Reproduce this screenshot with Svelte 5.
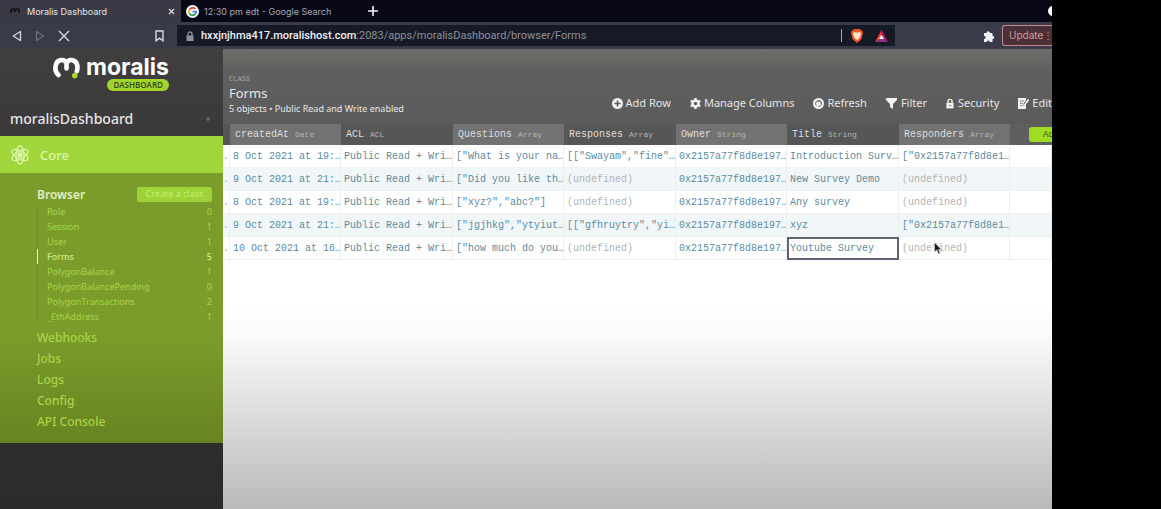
<script>
	const classes = [
		{ name: 'Role', count: 0 },
		{ name: 'Session', count: 1 },
		{ name: 'User', count: 1 },
		{ name: 'Forms', count: 5 },
		{ name: 'PolygonBalance', count: 1 },
		{ name: 'PolygonBalancePending', count: 0 },
		{ name: 'PolygonTransactions', count: 2 },
		{ name: '_EthAddress', count: 1 }
	];
	const sections = ['Webhooks', 'Jobs', 'Logs', 'Config', 'API Console'];

	const columns = [
		{ name: 'createdAt', type: 'Date' },
		{ name: 'ACL', type: 'ACL' },
		{ name: 'Questions', type: 'Array' },
		{ name: 'Responses', type: 'Array' },
		{ name: 'Owner', type: 'String' },
		{ name: 'Title', type: 'String' },
		{ name: 'Responders', type: 'Array' }
	];

	const acl = 'Public Read + Wri…';
	const owner = '0x2157a77f8d8e197…';
	const responder = '["0x2157a77f8d8e1…';
	const none = '(undefined)';

	const rows = [
		['8 Oct 2021 at 19:…', acl, '["What is your na…', '[["Swayam","fine"…', owner, 'Introduction Surv…', responder],
		['9 Oct 2021 at 21:…', acl, '["Did you like th…', none, owner, 'New Survey Demo', none],
		['8 Oct 2021 at 19:…', acl, '["xyz?","abc?"]', none, owner, 'Any survey', none],
		['9 Oct 2021 at 21:…', acl, '["jgjhkg","ytyiut…', '[["gfhruytry","yi…', owner, 'xyz', responder],
		['10 Oct 2021 at 16…', acl, '["how much do you…', none, owner, 'Youtube Survey', none]
	];

	let currentClass = 'Forms';
	let selected = { row: 4, col: 5 };
	let url = 'hxxjnjhma417.moralishost.com';
</script>

<div class="window">
	<header class="chrome">
		<div class="tabs">
			<div class="tab active">
				<svg class="favicon" viewBox="0 0 12 12"><path d="M2 8V6q0-2 2-2t2 3q0-3 2-3t2 2v2" fill="none" stroke="#15151b" stroke-width="2" /></svg>
				<span class="tab-title">Moralis Dashboard</span>
				<button class="plain close" aria-label="Close tab">
					<svg width="7" height="7" viewBox="0 0 7 7"><path d="M1 1l5 5M6 1L1 6" stroke="#d5d5dc" stroke-width="1.3" /></svg>
				</button>
			</div>
			<div class="tab">
				<svg class="google" viewBox="0 0 14 14">
					<circle cx="7" cy="7" r="7" fill="#fff" />
					<g fill="none" stroke-width="2">
						<path d="M3.6 5A4 4 0 0 1 10 4.3" stroke="#e84435" />
						<path d="M3.5 9A4 4 0 0 1 3.6 5" stroke="#f6bb1a" />
						<path d="M9.8 9.9A4 4 0 0 1 3.5 9" stroke="#34a453" />
						<path d="M7 7.2h4A4 4 0 0 1 9.8 9.9" stroke="#4285f4" />
					</g>
				</svg>
				<span class="tab-title">12:30 pm edt - Google Search</span>
			</div>
			<button class="plain new-tab" aria-label="New tab">
				<svg width="10" height="10" viewBox="0 0 10 10"><path d="M5 0v10M0 5h10" stroke="#f4f4f8" stroke-width="1.6" /></svg>
			</button>
			<svg class="account" width="4" height="10" viewBox="0 0 4 10"><circle cx="5" cy="5" r="5" fill="#fff" /></svg>
		</div>

		<div class="navbar">
			<button class="plain" aria-label="Back">
				<svg width="10" height="12" viewBox="0 0 10 12"><path d="M8.500 1.500v9L1.200 6z" fill="none" stroke="#d3d4da" stroke-width="1.4" stroke-linejoin="round" /></svg>
			</button>
			<button class="plain" aria-label="Forward">
				<svg width="10" height="12" viewBox="0 0 10 12"><path d="M1.500 1.500v9L8.500 6z" fill="none" stroke="#70727d" stroke-width="1.2" stroke-linejoin="round" /></svg>
			</button>
			<button class="plain" aria-label="Stop">
				<svg width="12" height="12" viewBox="0 0 12 12"><path d="M1 1l10 10M11 1L1 11" stroke="#d9dae0" stroke-width="1.4" /></svg>
			</button>
			<button class="plain bookmark" aria-label="Bookmark">
				<svg width="9" height="12" viewBox="0 0 9 12"><path d="M1 1h7v9.800L4.500 8.200 1 10.800z" fill="none" stroke="#d9dae0" stroke-width="1.4" /></svg>
			</button>
			<div class="address">
				<svg width="8" height="10" viewBox="0 0 8 10"><path d="M2 5V3a2 2 0 0 1 4 0v2" fill="none" stroke="#8e9099" stroke-width="1.3" /><path d="M.5 4.500h7V10h-7z" fill="#8e9099" /></svg>
				<a class="url" href="#forms"><b>{url}</b>:2083/apps/moralisDashboard/browser/Forms</a>
				<span class="divider"></span>
				<svg width="12" height="14" viewBox="0 0 12 14"><path d="M3 0h6l1 1.500 1.500 0L12 4l-1.500 6L6 14 1.500 10 0 4l.5-2.500H2z" fill="#f0592a" /><path d="M3 3l3 .8L9 3l1 2-1.500 4L6 11 3.500 9 2 5z" fill="#ffe6c8" /></svg>
				<svg class="bat" width="13" height="12" viewBox="0 0 13 12"><path d="M6.500 0L9.700 5.500 6.500 5z" fill="#9e1f63" /><path d="M6.500 0L0 12l6.500-4z" fill="#f0442c" /><path d="M0 12h13L6.500 8z" fill="#8d3197" /><path d="M6.500 0L13 12 6.500 8z" fill="#b31e63" /><path d="M6.500 4.800L9 9H4z" fill="#fff" /></svg>
			</div>
			<button class="plain extensions" aria-label="Extensions">
				<svg width="12" height="12" viewBox="0 0 12 12"><path d="M1 3h2.500a1.700 1.700 0 1 1 3.400 0H9.500v2.700a1.700 1.700 0 1 1 0 3.400V12H6.800a1.500 1.500 0 1 0-3 0H1V9a1.600 1.600 0 1 0 0-3.200z" fill="#eef0f6" /></svg>
			</button>
			<button class="update">Update <span>⋮</span></button>
		</div>
	</header>

	<div class="app">
		<aside class="sidebar">
			<div class="logo">
				<svg width="27" height="23" viewBox="0 0 27 23">
					<path d="M5.500 18C2.200 15 2 11 2.800 8 4.200 2.200 11.500 1.300 13.500 6.300v5.200V6.300C15.500 1.300 22.800 2.200 24.200 8c.5 2.600.3 4.500-.4 6.200" fill="none" stroke="#fff" stroke-width="4.6" stroke-linecap="round" stroke-linejoin="round" />
					<circle cx="21.800" cy="18.600" r="2.800" fill="#a6d72e" />
				</svg>
				<div class="brand">
					<span class="brand-name">moralis</span>
					<span class="pill">DASHBOARD</span>
				</div>
			</div>

			<button class="app-name">moralisDashboard <span>▼</span></button>

			<a class="core" href="#core">
				<svg width="20" height="20" viewBox="0 0 20 20" fill="none" stroke="#ddf5a8" stroke-width="1.3">
					<ellipse cx="10" cy="10" rx="4" ry="9" />
					<ellipse cx="10" cy="10" rx="4" ry="9" transform="rotate(60 10 10)" />
					<ellipse cx="10" cy="10" rx="4" ry="9" transform="rotate(120 10 10)" />
					<circle cx="10" cy="10" r="2" fill="#ddf5a8" />
				</svg>
				Core
			</a>

			<nav class="menu">
				<div class="browser">
					<a href="#browser">Browser</a>
					<button class="create">Create a class</button>
				</div>
				<ul class="classes">
					{#each classes as item (item.name)}
						<li class:current={item.name === currentClass}>
							<a href="#{item.name}">{item.name}</a>
							<span>{item.count}</span>
						</li>
					{/each}
				</ul>
				{#each sections as section}
					<a class="section" href="#{section}">{section}</a>
				{/each}
			</nav>
		</aside>

		<main class="content">
			<div class="toolbar">
				<div class="heading">
					<small>CLASS</small>
					<h1>Forms</h1>
					<p>5 objects • Public Read and Write enabled</p>
				</div>
				<div class="actions">
					<button class="plain">
						<svg width="11" height="11" viewBox="0 0 11 11"><circle cx="5.500" cy="5.500" r="5.500" fill="#f2f2f2" /><path d="M5.500 2.500v6M2.500 5.500h6" stroke="#5c5c5c" stroke-width="1.600" /></svg>
						Add Row
					</button>
					<button class="plain">
						<svg width="11" height="11" viewBox="0 0 12 12"><circle cx="6" cy="6" r="3.300" fill="none" stroke="#f2f2f2" stroke-width="2.600" /><path d="M6 0v2.500M6 9.500V12M.8 3l2.200 1.300M9 7.700L11.200 9M.8 9L3 7.700M9 4.300L11.200 3" stroke="#f2f2f2" stroke-width="2.400" /></svg>
						Manage Columns
					</button>
					<button class="plain">
						<svg width="11" height="11" viewBox="0 0 11 11"><circle cx="5.500" cy="5.500" r="5.500" fill="#f2f2f2" /><path d="M3.200 7.300A3 3 0 1 1 5.500 8.500M3.800 3.700A2.800 2.800 0 0 1 8.300 5.500" fill="none" stroke="#666" stroke-width="1" /></svg>
						Refresh
					</button>
					<button class="plain filter">
						<svg width="11" height="11" viewBox="0 0 11 11"><path d="M0 0h11v2L7 6v5L4 9V6L0 2z" fill="#f2f2f2" /></svg>
						Filter
					</button>
					<button class="plain filter">
						<svg width="8" height="11" viewBox="0 0 9 11"><path d="M2.200 5.500V3.200a2.300 2.300 0 0 1 4.600 0v2.300" fill="none" stroke="#f2f2f2" stroke-width="1.600" /><path d="M.5 4.800h8V11h-8z" fill="#f2f2f2" /><path d="M3.200 7.700h2.600" stroke="#666" /></svg>
						Security
					</button>
					<button class="plain">
						<svg width="11" height="11" viewBox="0 0 11 11"><path d="M0 0h8v2L5.500 6v2L8 7v4H0z" fill="#f2f2f2" /><path d="M2 3h4M2 5.300h3M2 7.600h2.500" stroke="#666" stroke-width=".8" /><path d="M10.500 1.500L6 8" stroke="#f2f2f2" stroke-width="1.600" /></svg>
						Edit
					</button>
				</div>
			</div>

			<table>
				<colgroup>
					<col class="edge" />
					{#each columns as column}
						<col class="data" />
					{/each}
					<col />
				</colgroup>
				<thead>
					<tr>
						<th></th>
						{#each columns as column}
							<th>{column.name} <small>{column.type}</small></th>
						{/each}
						<th class="add-cell"><button class="add">Add</button></th>
					</tr>
				</thead>
				<tbody>
					{#each rows as row, r}
						<tr>
							<td class="dots">.</td>
							{#each row as value, c}
								<td class:undef={value === none} class:selected={r === selected.row && c === selected.col}>
									{value}
									{#if r === 4 && c === 6}
										<svg class="pointer" width="8" height="13" viewBox="0 0 8 13"><path d="M.5.5v9.500L2.800 8l1.700 4 1.600-.7L4.500 7.500h3z" fill="#222" stroke="#ddd" stroke-width=".6" /></svg>
									{/if}
								</td>
							{/each}
							<td></td>
						</tr>
					{/each}
				</tbody>
			</table>
		</main>
	</div>
</div>

<style>
	:global(body) {
		margin: 0;
		background: #000;
	}

	.window {
		display: flex;
		flex-direction: column;
		min-height: 100vh;
		margin-right: 109px;
		overflow: hidden;
		font-family: 'Noto Sans', 'Open Sans', sans-serif;
	}

	button {
		font-family: inherit;
		cursor: pointer;
	}

	a {
		color: inherit;
		text-decoration: none;
	}

	svg {
		flex: none;
	}

	.plain {
		display: flex;
		align-items: center;
		padding: 0;
		border: none;
		background: none;
		color: inherit;
	}

	.chrome {
		font-family: Inter, sans-serif;
	}

	.tabs {
		display: flex;
		align-items: center;
		height: 22px;
		background: #080816;
	}

	.tab {
		display: flex;
		align-items: center;
		box-sizing: border-box;
		width: 178px;
		height: 22px;
		padding-left: 5px;
		color: #a9a9b5;
		font-size: 9px;
		white-space: nowrap;
	}

	.tab.active {
		width: 181px;
		padding: 0 6px 0 9px;
		background: #393a46;
		color: #e4e4ea;
	}

	.favicon {
		width: 12px;
		height: 12px;
		margin-right: 6px;
	}

	.google {
		width: 13px;
		height: 13px;
		margin-right: 5px;
	}

	.close {
		margin-left: auto;
	}

	.new-tab {
		margin-left: 9px;
	}

	.account {
		margin-left: auto;
	}

	.navbar {
		display: flex;
		align-items: center;
		gap: 13px;
		height: 27px;
		padding-left: 12px;
		background: #393c48;
	}

	.bookmark {
		margin-left: 72px;
	}

	.address {
		display: flex;
		flex: 1;
		align-items: center;
		box-sizing: border-box;
		height: 21px;
		padding: 0 7px 0 9px;
		background: #161a27;
		color: #8d909b;
		font-family: Roboto, sans-serif;
		font-size: 11px;
	}

	.url {
		flex: 1;
		margin-left: 7px;
		white-space: nowrap;
	}

	.url b {
		color: #f0f0f5;
		font-weight: 500;
	}

	.divider {
		width: 1px;
		height: 13px;
		margin-right: 9px;
		background: #a5a7b0;
	}

	.bat {
		margin-left: 12px;
	}

	.extensions {
		margin-left: 75px;
	}

	.update {
		display: flex;
		justify-content: space-between;
		width: 50px;
		height: 21px;
		margin-left: -6px;
		padding: 0 0 0 6px;
		border: 1px solid #c08b8b;
		border-right: none;
		border-radius: 3px 0 0 3px;
		background: #4c3038;
		color: #d29a9a;
		font-size: 10px;
		line-height: 19px;
	}

	.app {
		display: flex;
		flex: 1;
	}

	.sidebar {
		flex: none;
		width: 223px;
		background: linear-gradient(#403e3f, #383637 30%, #2c2a2b);
	}

	.logo {
		display: flex;
		height: 54px;
		padding: 8px 0 0 53px;
	}

	.brand {
		display: flex;
		flex-direction: column;
		align-items: flex-end;
		margin-left: 6px;
	}

	.brand-name {
		color: #fff;
		font-family: Inter, sans-serif;
		font-size: 23px;
		font-weight: 700;
		line-height: 20px;
	}

	.pill {
		margin-top: 2px;
		padding: 0 6px;
		border-radius: 6px;
		background: #a3d42c;
		color: #35431a;
		font-family: 'Open Sans', sans-serif;
		font-size: 8px;
		font-weight: 600;
		line-height: 12px;
	}

	.app-name {
		display: flex;
		align-items: center;
		justify-content: space-between;
		width: 100%;
		height: 25px;
		padding: 0 11px 9px 10px;
		border: none;
		background: none;
		color: #e6e6e6;
		font-size: 14px;
		font-weight: 500;
		line-height: 16px;
	}

	.app-name span {
		color: #686667;
		font-size: 8px;
	}

	.core {
		display: flex;
		align-items: center;
		gap: 10px;
		height: 37px;
		padding: 0 10px;
		background: #a0d53b;
		color: #e1f6b0;
		font-size: 13px;
		font-weight: 500;
	}

	.menu {
		padding: 12px 11px 11px 37px;
		background: linear-gradient(#7b9c2b, #7b9c2b 60%, #688321);
		color: #a9d448;
	}

	.browser {
		display: flex;
		align-items: center;
		justify-content: space-between;
		height: 18px;
		color: #e3f0c3;
		font-size: 12px;
		font-weight: 600;
	}

	.create {
		width: 75px;
		height: 15px;
		padding: 0;
		border: none;
		border-radius: 2px;
		background: #9dd336;
		color: #c6ec7c;
		font-size: 9px;
		line-height: 14px;
	}

	.classes {
		margin: 1px 0 3px;
		padding: 0;
		list-style: none;
		font-size: 9px;
		line-height: 15px;
	}

	.classes li {
		display: flex;
		justify-content: space-between;
		padding-left: 9px;
		border-left: 1px solid #679425;
	}

	.classes .current {
		border-color: #f0f8dc;
		color: #cdea8c;
		font-weight: 500;
	}

	.section {
		display: block;
		font-size: 12px;
		font-weight: 500;
		line-height: 21px;
	}

	.content {
		flex: 1;
		min-width: 0;
		background: linear-gradient(#fff 55%, #fbfbfa 62%, #b9b9b7);
	}

	.toolbar {
		display: flex;
		align-items: flex-end;
		justify-content: space-between;
		box-sizing: border-box;
		height: 75px;
		padding-left: 6px;
		background: linear-gradient(#6c6d68, #606060 30%, #5b5b5b);
		color: #e6e6e6;
		white-space: nowrap;
	}

	.heading small {
		display: block;
		color: #a5a5a5;
		font-family: 'Liberation Mono', monospace;
		font-size: 7px;
		line-height: 8px;
	}

	.heading h1 {
		margin: 0;
		font-size: 13px;
		font-weight: 400;
		line-height: 20px;
	}

	.heading p {
		margin: 0 0 9px;
		font-size: 9px;
		line-height: 12px;
	}

	.actions {
		display: flex;
		gap: 19px;
		margin-bottom: 12px;
	}

	.actions button {
		gap: 3px;
		font-size: 11px;
		line-height: 18px;
	}

	.actions .filter {
		gap: 4px;
	}

	table {
		width: 100%;
		border-collapse: separate;
		border-spacing: 0;
		table-layout: fixed;
		font-family: 'Liberation Mono', monospace;
		font-size: 10px;
	}

	.edge {
		width: 7px;
	}

	.data {
		width: 111px;
	}

	.data:nth-child(odd) {
		width: 112px;
	}

	th,
	td {
		box-sizing: border-box;
		height: 23px;
		padding: 0 0 0 3px;
		overflow: hidden;
		text-align: left;
		white-space: nowrap;
	}

	th {
		height: 21px;
		padding-left: 5px;
		background: #565656;
		color: #dedede;
		font-weight: 400;
	}

	th:nth-child(even) {
		background: #727272;
	}

	th small {
		color: #b5b5b5;
		font-size: 8px;
	}

	th.add-cell {
		padding: 0 0 0 19px;
		background: #5f5f5f;
	}

	.add {
		display: block;
		width: 100%;
		height: 15px;
		padding: 0 0 0 14px;
		overflow: hidden;
		border: none;
		border-radius: 3px 0 0 3px;
		background: #a0dc22;
		color: #3e5a14;
		font-size: 9px;
		text-align: left;
	}

	td {
		border-right: 1px solid #eeeeec;
		border-bottom: 1px solid #eff1f0;
		color: #5b8ba0;
	}

	tbody tr:nth-child(even) {
		background: #f1f6f8;
	}

	td.undef {
		position: relative;
		color: #b1b5b6;
	}

	td.dots {
		padding: 0;
		color: #a5a8a8;
	}

	td.selected {
		border: 2px solid #626372;
		padding-left: 1px;
	}

	.pointer {
		position: absolute;
		top: 5px;
		left: 35px;
	}
</style>
